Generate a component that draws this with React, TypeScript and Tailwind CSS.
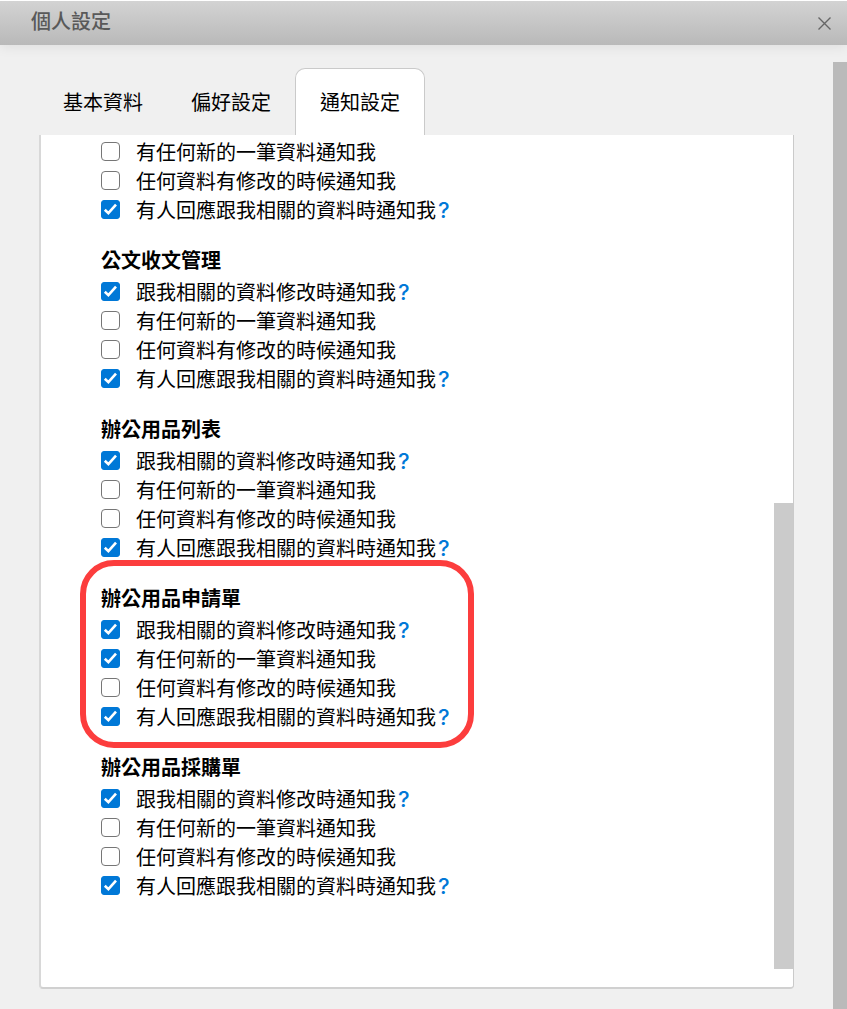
import { useState } from "react";
import clsx from "clsx";

interface NotifyOption {
  label: string;
  checked: boolean;
  hasHelp?: boolean;
}

interface NotifyGroup {
  title?: string;
  highlighted?: boolean;
  options: NotifyOption[];
}

const RELATED = "跟我相關的資料修改時通知我";
const CREATED = "有任何新的一筆資料通知我";
const CHANGED = "任何資料有修改的時候通知我";
const REPLIED = "有人回應跟我相關的資料時通知我";

const buildOptions = (created = false): NotifyOption[] => [
  { label: RELATED, checked: true, hasHelp: true },
  { label: CREATED, checked: created },
  { label: CHANGED, checked: false },
  { label: REPLIED, checked: true, hasHelp: true },
];

const groups: NotifyGroup[] = [
  { options: buildOptions().slice(1) },
  { title: "公文收文管理", options: buildOptions() },
  { title: "辦公用品列表", options: buildOptions() },
  { title: "辦公用品申請單", highlighted: true, options: buildOptions(true) },
  { title: "辦公用品採購單", options: buildOptions() },
];

const tabs = ["基本資料", "偏好設定", "通知設定"];

function OptionRow({ id, option }: { id: string; option: NotifyOption }) {
  const [checked, setChecked] = useState(option.checked);

  return (
    <li className="flex h-[29px] items-center">
      <span className="grid shrink-0">
        <input
          id={id}
          type="checkbox"
          checked={checked}
          onChange={(e) => setChecked(e.target.checked)}
          className="peer col-start-1 row-start-1 size-[19px] appearance-none rounded-[4px] border border-[#767676] bg-white checked:rounded-[3px] checked:border-[#0078d7] checked:bg-[#0078d7]"
        />
        <svg
          viewBox="0 0 19 19"
          fill="none"
          stroke="white"
          strokeWidth="2.6"
          className="pointer-events-none invisible col-start-1 row-start-1 size-[19px] peer-checked:visible"
        >
          <path d="M3.8 9.8 7.4 13.2 15 4.6" />
        </svg>
      </span>
      <label htmlFor={id} className="pl-4">
        {option.label}
      </label>
      {option.hasHelp && (
        <button
          type="button"
          className="pl-[2px] font-[Inter,sans-serif] text-[22px] leading-none font-medium text-[#0078d7]"
        >
          ?
        </button>
      )}
    </li>
  );
}

function GroupSection({ group, index }: { group: NotifyGroup; index: number }) {
  return (
    <section className="relative w-fit">
      {group.title && <h2 className="h-[35px] leading-[35px] font-bold">{group.title}</h2>}
      <ul>
        {group.options.map((option, i) => (
          <OptionRow key={option.label} id={`notify-${index}-${i}`} option={option} />
        ))}
      </ul>
      {group.highlighted && (
        <div className="pointer-events-none absolute -top-5 -right-6 -bottom-[17px] -left-[21px] rounded-[34px] border-6 border-[#fc3d3d]" />
      )}
    </section>
  );
}

export default function App() {
  const [activeTab, setActiveTab] = useState("通知設定");

  return (
    <div className="flex min-h-screen flex-col bg-[#f0f0f0] font-['Noto_Sans_CJK_TC',sans-serif] text-xl text-black">
      <header className="flex h-[45px] shrink-0 items-center justify-between border-t border-white bg-linear-to-b from-[#d3d3d3] to-[#b9b9b9] pr-4 pl-[31px] shadow-[0_2px_12px_rgba(0,0,0,0.08)]">
        <h1 className="pb-1 leading-7 font-medium text-[#595959]">個人設定</h1>
        <button type="button" aria-label="關閉" className="pt-px text-[#666]">
          <svg width="13" height="13" viewBox="0 0 13 13" fill="none" stroke="currentColor" strokeWidth="1.4">
            <path d="M0.5 0.5 12.5 12.5M12.5 0.5 0.5 12.5" />
          </svg>
        </button>
      </header>

      <div className="flex flex-1">
        <main className="flex min-w-0 flex-1 flex-col px-[39px] pt-[23px] pb-5">
          <nav className="flex h-[67px] shrink-0">
            {tabs.map((tab) => (
              <button
                key={tab}
                type="button"
                onClick={() => setActiveTab(tab)}
                className={clsx(
                  "rounded-t-[10px] border border-b-0",
                  tab === activeTab ? "border-[#cacaca] bg-white px-6" : "border-transparent px-[23px]"
                )}
              >
                {tab}
              </button>
            ))}
          </nav>

          <div className="flex flex-1 rounded-b border-r border-b-2 border-l-2 border-r-[#cacaca] border-b-[#d0d0d0] border-l-[#d8d8d8] bg-white">
            <div className="flex min-w-0 flex-1 flex-col gap-[18px] pt-[2px] pb-20 pl-[60px]">
              {groups.map((group, i) => (
                <GroupSection key={i} group={group} index={i} />
              ))}
            </div>
            <div className="flex w-[19px] shrink-0 flex-col pb-[18px]">
              <div className="flex-[368]" />
              <div className="flex-[466] bg-[#cbcbcb]" />
            </div>
          </div>
        </main>

        <div className="flex w-[14px] shrink-0 flex-col pt-[17px]">
          <div className="flex-1 bg-[#bababa]" />
        </div>
      </div>
    </div>
  );
}
